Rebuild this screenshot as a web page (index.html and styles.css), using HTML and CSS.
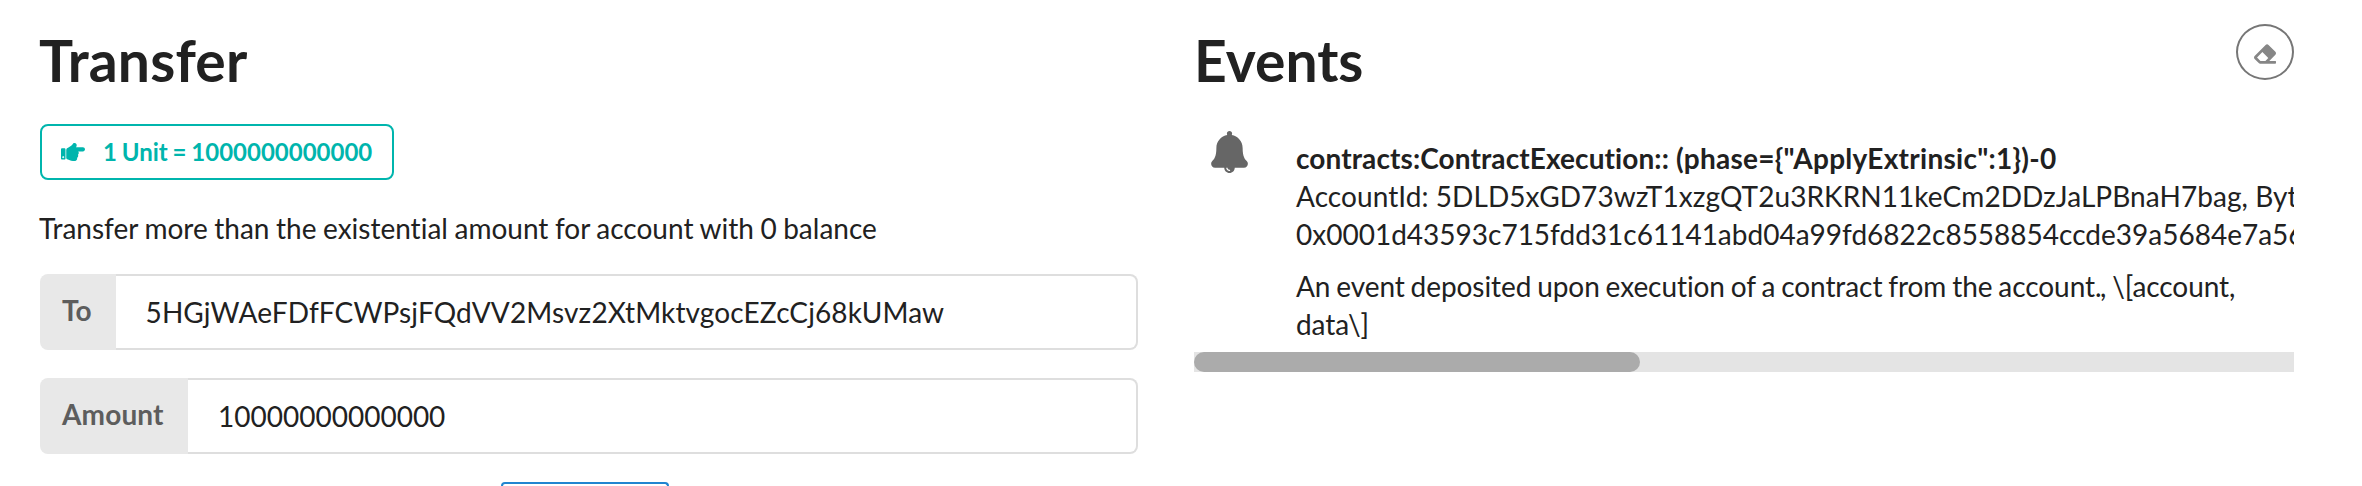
FILE: index.html
```html
<!DOCTYPE html>
<html lang="en">
<head>
<meta charset="utf-8">
<title>Transfer</title>
<link rel="stylesheet" href="styles.css">
</head>
<body>
<main class="grid">
  <section class="column">
    <h1 class="title title-transfer">Transfer</h1>
    <div class="unit-label">
      <svg class="unit-icon" viewBox="0 0 512 512"><path d="M512 199.652c0 23.625-20.65 43.826-44.8 43.826h-99.851c16.34 17.048 18.346 49.766-6.299 70.944 14.288 22.829 2.147 53.017-16.45 62.315C353.574 425.878 322.654 448 272 448c-2.746 0-13.276-.203-16-.195-61.971.168-76.894-31.065-123.731-38.315C120.596 407.683 112 397.599 112 385.786V214.261l.002-.001c.011-18.366 10.607-35.889 28.464-43.845 28.886-12.994 95.413-49.038 107.534-77.323 7.797-18.194 21.384-29.084 40-29.092 34.222-.014 57.752 35.098 44.119 66.908-3.583 8.359-8.312 16.67-14.153 24.918H467.2c23.45 0 44.8 20.543 44.8 43.826zM96 200v192c0 13.255-10.745 24-24 24H24c-13.255 0-24-10.745-24-24V200c0-13.255 10.745-24 24-24h48c13.255 0 24 10.745 24 24zM68 368c0-11.046-8.954-20-20-20s-20 8.954-20 20 8.954 20 20 20 20-8.954 20-20z"/></svg>
      <span>1 Unit = 1000000000000</span>
    </div>
    <p class="hint">Transfer more than the existential amount for account with 0 balance</p>
    <div class="field">
      <div class="field-label">To</div>
      <div class="field-value field-value-address">5HGjWAeFDfFCWPsjFQdVV2Msvz2XtMktvgocEZcCj68kUMaw</div>
    </div>
    <div class="field">
      <div class="field-label field-label-amount">Amount</div>
      <div class="field-value">10000000000000</div>
    </div>
    <div class="submit"></div>
  </section>
  <section class="column">
    <div class="events-head">
      <h1 class="title">Events</h1>
      <div class="erase">
        <svg class="erase-icon" viewBox="0 0 512 512"><path d="M497.941 273.941c18.745-18.745 18.745-49.137 0-67.882l-160-160c-18.745-18.745-49.136-18.746-67.883 0l-256 256c-18.745 18.745-18.745 49.137 0 67.882l96 96A48.004 48.004 0 0 0 144 480h356c6.627 0 12-5.373 12-12v-40c0-6.627-5.373-12-12-12H355.883l142.058-142.059zm-302.627-62.627l137.373 137.373L265.373 416H150.628l-80-80 124.686-124.686z"/></svg>
      </div>
    </div>
    <div class="feed">
      <svg class="bell" viewBox="0 0 448 512"><path d="M433.884 366.059C411.634 343.809 384 316.118 384 208c0-79.394-57.831-145.269-133.663-157.83A31.845 31.845 0 0 0 256 32c0-17.673-14.327-32-32-32s-32 14.327-32 32c0 6.75 2.095 13.008 5.663 18.17C121.831 62.731 64 128.606 64 208c0 108.118-27.643 135.809-49.893 158.059C-16.042 396.208 5.325 448 48.048 448H160c0 35.346 28.654 64 64 64s64-28.654 64-64h111.943c42.638 0 64.151-51.731 33.941-81.941zM224 472a8 8 0 0 1 0 16c-22.056 0-40-17.944-40-40h16c0 13.234 10.766 24 24 24z"/></svg>
      <div class="event">
        <div class="summary">contracts:ContractExecution:: <span class="phase">(phase={"ApplyExtrinsic":1})-0</span></div>
        <div class="account">AccountId: 5DLD5xGD73wzT1xzgQT2u3RKRN11keCm2DDzJaLPBnaH7bag, Byt</div>
        <div>0x0001d43593c715fdd31c61141abd04a99fd6822c8558854ccde39a5684e7a56</div>
        <div class="docs">An event deposited upon execution of a contract from the account<span class="stop">.</span>, \[account,<br>data\]</div>
      </div>
    </div>
    <div class="scrollbar"><div class="thumb"></div></div>
  </section>
</main>
</body>
</html>
```
FILE: styles.css
```css
* { box-sizing: border-box; }

body {
  margin: 0;
  background: #fff;
  color: #212121;
  font: 28px/38px Lato, "Liberation Sans", sans-serif;
  font-variant-ligatures: none;
}

.grid {
  display: grid;
  grid-template-columns: 1098px 1100px;
  column-gap: 56px;
  height: 486px;
  padding: 24px 0 0 40px;
  overflow: hidden;
}

.column { min-width: 0; }

.title {
  margin: 0;
  padding-bottom: 2px;
  font-size: 57px;
  line-height: 72px;
  font-weight: 700;
}

.title-transfer {
  margin-left: -1px;
  letter-spacing: .2px;
}

.unit-label {
  display: flex;
  align-items: center;
  gap: 18px;
  width: 354px;
  height: 56px;
  margin-top: 26px;
  padding-left: 19px;
  border: 2px solid #00b5ad;
  border-radius: 8px;
  color: #00b5ad;
  font-size: 24px;
  line-height: 24px;
  font-weight: 700;
  white-space: nowrap;
  word-spacing: -1px;
}

.unit-icon {
  width: 24px;
  height: 24px;
  fill: currentColor;
}

.hint {
  margin: 29px 0 27px -1px;
  word-spacing: -.6px;
}

.field {
  display: flex;
  height: 76px;
  margin-bottom: 28px;
}

.field-label {
  padding: 17px 24px 0 22px;
  border-radius: 8px 0 0 8px;
  background: #e8e8e8;
  color: #5d5d5d;
  font-weight: 700;
}

.field-label-amount {
  width: 148px;
  padding-right: 0;
  letter-spacing: .15px;
}

.field-value {
  flex: 1;
  padding: 17px 28px 0 30px;
  border: 2px solid #dedede;
  border-left: 0;
  border-radius: 0 8px 8px 0;
}

.field-value-address { letter-spacing: .12px; }

.submit {
  width: 168px;
  height: 4px;
  margin-left: 461px;
  border: 2px solid #2185d0;
  border-bottom: 0;
  border-radius: 8px 8px 0 0;
}

.events-head {
  display: flex;
  justify-content: space-between;
}

.erase {
  display: flex;
  align-items: center;
  justify-content: center;
  width: 58px;
  height: 56px;
  border: 2px solid #767676;
  border-radius: 50%;
}

.erase-icon {
  width: 22px;
  height: 22px;
  margin-top: 3px;
  fill: #868686;
}

.feed {
  display: flex;
  height: 254px;
  padding-left: 17px;
  overflow: hidden;
  white-space: nowrap;
}

.bell {
  flex: none;
  width: 37px;
  height: 42px;
  margin: 33px 48px 0 0;
  fill: #666;
}

.event { padding-top: 41px; }

.summary {
  font-weight: 700;
  letter-spacing: .1px;
}

.phase { letter-spacing: .27px; }

.account { letter-spacing: .07px; }

.docs {
  margin-top: 14px;
  letter-spacing: -.07px;
  word-spacing: -1.2px;
}

.stop { letter-spacing: -1.6px; }

.scrollbar {
  height: 20px;
  background: #e4e4e4;
}

.thumb {
  width: 446px;
  height: 20px;
  border-radius: 10px;
  background: #ababab;
}
```
